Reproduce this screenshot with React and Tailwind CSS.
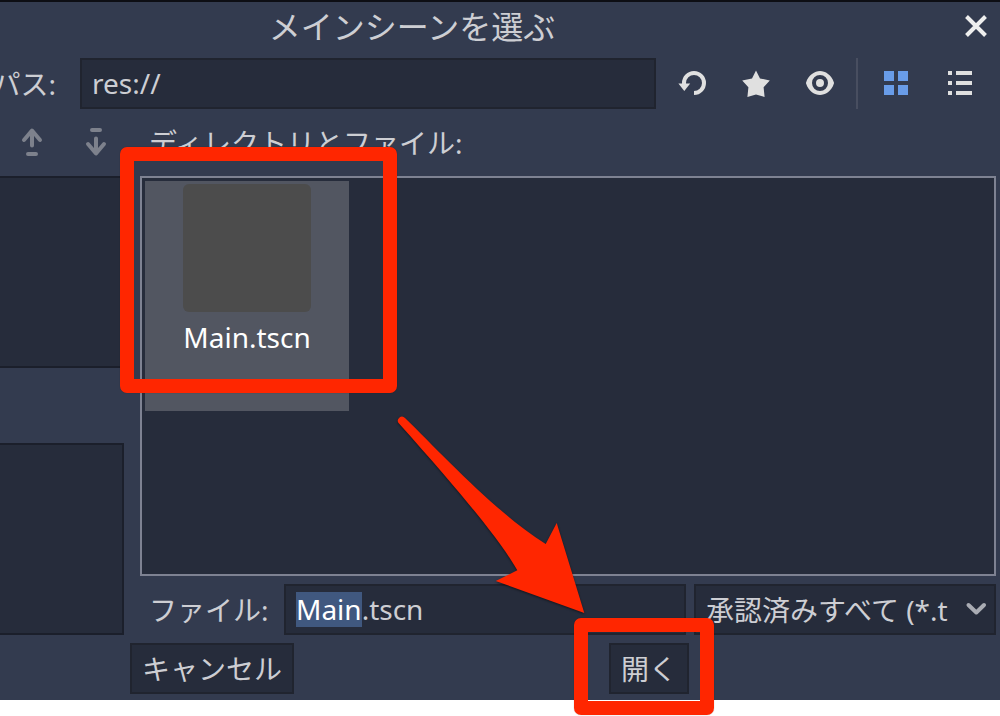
import { useEffect, useRef, useState } from "react";

function ReloadIcon() {
  return (
    <svg className="h-8 w-8" viewBox="0 0 32 32" fill="none" aria-hidden="true">
      <path d="M8 17v-1a10 10 0 1 1 10 10" stroke="currentColor" strokeWidth="4" />
      <path d="M2.4 16.4h11.8L8.3 24z" fill="currentColor" />
    </svg>
  );
}

function StarIcon() {
  return (
    <svg className="h-8 w-8" viewBox="0 0 32 32" fill="currentColor" aria-hidden="true">
      <path d="M16 3.6l4 7.8 9.8 2-6.2 6.8 1 9.8-8.6-2.4L7.4 30l1-9.8-6.2-6.8 9.8-2z" />
    </svg>
  );
}

function EyeIcon() {
  return (
    <svg className="h-8 w-8" viewBox="0 0 16 16" fill="currentColor" aria-hidden="true">
      <path d="M8 2C5.443 2 2.209 3.948 1.045 7.705a1 1 0 0 0-.006.572C2.163 12.211 5.5 14 8 14s5.837-1.789 6.961-5.723a1 1 0 0 0 0-.55C13.861 3.935 10.554 2 8 2zm0 2a4 4 0 0 1 4 4 4 4 0 0 1-4 4 4 4 0 0 1-4-4 4 4 0 0 1 4-4zm0 2a2 2 0 0 0-2 2 2 2 0 0 0 2 2 2 2 0 0 0 2-2 2 2 0 0 0-2-2z" />
    </svg>
  );
}

function GridIcon() {
  return (
    <svg className="h-8 w-8" viewBox="0 0 32 32" fill="currentColor" aria-hidden="true">
      <path d="M4 4h10v10H4zM18 4h10v10H18zM4 18h10v10H4zM18 18h10v10H18z" />
    </svg>
  );
}

function ListIcon() {
  return (
    <svg className="h-8 w-8" viewBox="0 0 32 32" fill="currentColor" aria-hidden="true">
      <path d="M4 4h4v4H4zM12 4h16v4H12zM4 14h4v4H4zM12 14h16v4H12zM4 24h4v4H4zM12 24h16v4H12z" />
    </svg>
  );
}

function CloseIcon() {
  return (
    <svg className="h-8 w-8" viewBox="0 0 32 32" fill="none" aria-hidden="true">
      <path d="M6.5 5.5l19 19M25.5 5.5l-19 19" stroke="currentColor" strokeWidth="4" />
    </svg>
  );
}

function MoveUpIcon() {
  return (
    <svg
      className="h-8 w-8"
      viewBox="0 0 32 32"
      fill="none"
      stroke="currentColor"
      strokeWidth="4"
      strokeLinecap="round"
      strokeLinejoin="round"
      aria-hidden="true"
    >
      <path d="M8 14l8-9.5 8 9.5M16 6v13.5M12 28h8" />
    </svg>
  );
}

function MoveDownIcon() {
  return (
    <svg
      className="h-8 w-8"
      viewBox="0 0 32 32"
      fill="none"
      stroke="currentColor"
      strokeWidth="4"
      strokeLinecap="round"
      strokeLinejoin="round"
      aria-hidden="true"
    >
      <path d="M8 18l8 9.5 8-9.5M16 26V12.5M12 4h8" />
    </svg>
  );
}

function IconButton({ label, active, children }) {
  return (
    <button
      type="button"
      aria-label={label}
      className={
        active
          ? "flex w-14 shrink-0 items-center justify-center pb-[1px] text-[#699ce8]"
          : "flex w-14 shrink-0 items-center justify-center pb-[1px] text-[#e0e0e0]"
      }
    >
      {children}
    </button>
  );
}

/* Tutorial arrow that leads from the scene file to the open button */
function Arrow() {
  return (
    <svg
      className="pointer-events-none absolute top-[232px] left-[248px] z-10 h-[210px] w-[210px] drop-shadow-[0_1px_1px_rgba(0,0,0,0.5)]"
      viewBox="390 410 210 210"
      fill="#ff2600"
      aria-hidden="true"
    >
      <path d="M405 418C440 452 497 514 545.7 544L556.7 523 584.3 613 495.7 581 517.3 570.3C500 540 462 494 399 423.5A4 4 0 0 1 405 418z" />
    </svg>
  );
}

export default function App() {
  const [path, setPath] = useState("res://");
  const [file, setFile] = useState("Main.tscn");
  const fileRef = useRef(null);

  // Preselect the base name so typing keeps the extension
  useEffect(() => {
    fileRef.current.focus();
    fileRef.current.setSelectionRange(0, 4);
  }, []);

  return (
    <div className="h-screen overflow-hidden bg-white pb-4 font-['Noto_Sans','Noto_Sans_CJK_JP',sans-serif] text-[28px] leading-[38px] text-[#cdced3]">
      <div className="flex h-full flex-col border-t-2 border-[#0d0e14] bg-[#333b4f] pb-[6px]">
        {/* Title bar */}
        <header className="flex h-14 shrink-0 items-center pb-[6px]">
          <h1 className="flex-1 pr-32 text-center text-[32px]">メインシーンを選ぶ</h1>
          <button
            type="button"
            aria-label="閉じる"
            className="flex h-12 w-12 items-center justify-center text-[#eeeeee]"
          >
            <CloseIcon />
          </button>
        </header>

        {/* Path bar */}
        <div className="flex h-[51px] shrink-0 gap-2 pr-3">
          <div className="flex w-14 shrink-0 items-center justify-end overflow-hidden">
            <label htmlFor="path" className="shrink-0 whitespace-nowrap">
              パス:
            </label>
          </div>
          <input
            id="path"
            value={path}
            onChange={(e) => setPath(e.target.value)}
            className="ml-4 min-w-0 flex-1 border-2 border-[#20242f] bg-[#262c3b] px-[10px] leading-[35px] outline-none"
          />
          <IconButton label="更新">
            <ReloadIcon />
          </IconButton>
          <IconButton label="お気に入り">
            <StarIcon />
          </IconButton>
          <IconButton label="隠しファイル">
            <EyeIcon />
          </IconButton>
          <div className="w-1 shrink-0 border-l-2 border-[#484e60]" />
          <IconButton label="グリッド表示" active>
            <GridIcon />
          </IconButton>
          <IconButton label="リスト表示">
            <ListIcon />
          </IconButton>
        </div>

        <div className="flex min-h-0 flex-1 gap-4 pr-1">
          {/* Favorites and recent */}
          <aside className="flex w-[124px] shrink-0 flex-col">
            <div className="flex h-[67px] shrink-0 items-center gap-8 pb-[1px] pl-4 text-[#7d818c]">
              <button type="button" aria-label="上へ移動">
                <MoveUpIcon />
              </button>
              <button type="button" aria-label="下へ移動">
                <MoveDownIcon />
              </button>
            </div>
            <div className="flex flex-1 flex-col gap-[75px]">
              <div className="flex-1 border-y-2 border-r-2 border-[#1b1f2b] bg-[#262c3b]" />
              <div className="flex-1 border-y-2 border-r-2 border-[#1b1f2b] bg-[#262c3b]" />
            </div>
          </aside>

          <main className="flex min-w-0 flex-1 flex-col">
            <h2 className="flex h-[67px] shrink-0 items-center pl-[9px]">ディレクトリとファイル:</h2>
            <div className="relative min-h-0 flex-1 border-2 border-[#7e8292] bg-[#262c3b] p-[3px]">
              <button
                type="button"
                className="relative flex h-[230px] w-[204px] flex-col items-center bg-[#525661] pt-[3px] text-white"
              >
                <span className="h-32 w-32 rounded-md bg-[#4c4c4c]" />
                <span className="mt-[6px]">Main.tscn</span>
                <span className="pointer-events-none absolute -top-[34px] -right-12 bottom-[18px] -left-[25px] z-10 rounded-[7px] border-[14px] border-[#ff2600] shadow-[0_0_1px_rgba(0,0,0,0.4)]" />
              </button>
              <Arrow />
            </div>

            <div className="mt-2 flex h-[51px] shrink-0">
              <label htmlFor="file" className="flex w-36 shrink-0 items-center pl-[9px]">
                ファイル:
              </label>
              <input
                id="file"
                ref={fileRef}
                value={file}
                onChange={(e) => setFile(e.target.value)}
                className="mr-2 min-w-0 flex-1 border-2 border-[#20242f] bg-[#262c3b] px-[10px] leading-[35px] caret-transparent outline-none selection:bg-[#40587f] selection:text-white"
              />
              <div className="relative w-[302px] shrink-0">
                <select
                  aria-label="ファイルの種類"
                  className="h-full w-full appearance-none border-2 border-[#20242f] bg-[#262c3b] pr-10 pl-[10px] outline-none"
                >
                  <option>承認済みすべて (*.t</option>
                </select>
                <svg
                  className="pointer-events-none absolute top-[9px] right-1 h-8 w-8 text-[#a9acb3]"
                  viewBox="0 0 32 32"
                  fill="none"
                  stroke="currentColor"
                  strokeWidth="4"
                  strokeLinecap="round"
                  strokeLinejoin="round"
                  aria-hidden="true"
                >
                  <path d="M8.5 12l7.8 7.5L24 12" />
                </svg>
              </div>
            </div>
          </main>
        </div>

        {/* Dialog buttons */}
        <footer className="mt-2 flex h-[51px] shrink-0 gap-[315px] pl-[130px]">
          <button
            type="button"
            className="border-2 border-[#20242f] bg-[#262c3b] px-[10px] whitespace-nowrap"
          >
            キャンセル
          </button>
          <div className="relative">
            <button
              type="button"
              className="h-full border-2 border-[#20242f] bg-[#262c3b] px-[10px] whitespace-nowrap"
            >
              開く
            </button>
            <div className="pointer-events-none absolute -top-[25px] -right-[25px] -bottom-[21px] -left-[35px] z-10 rounded-[7px] border-[14px] border-[#ff2600] shadow-[0_0_1px_rgba(0,0,0,0.4)]" />
          </div>
        </footer>
      </div>
    </div>
  );
}
